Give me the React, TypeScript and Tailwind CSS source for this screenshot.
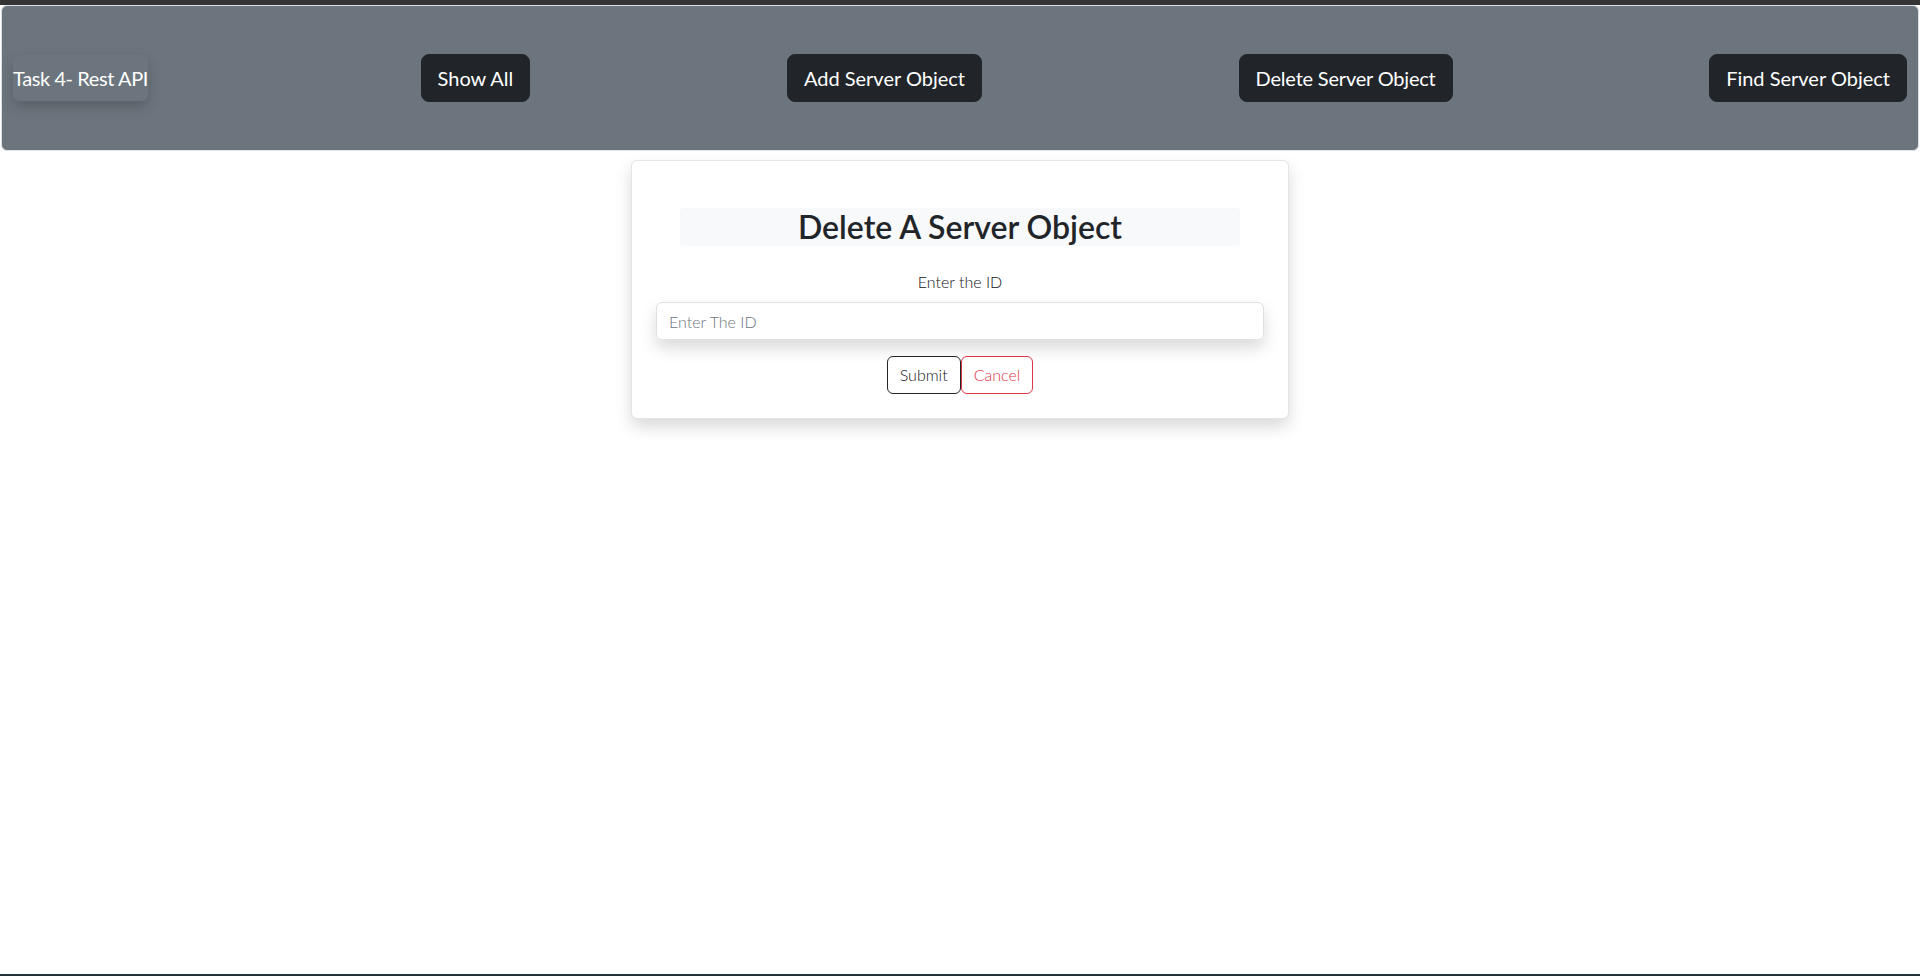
import React from "react";

const navBtn =
  "h-[48px] px-4 rounded-lg bg-[#212529] text-white text-[20px] leading-[30px] border border-[#212529] whitespace-nowrap";

export default function App() {
  return (
    <div className="w-full h-[976px] bg-white flex flex-col font-['Lato','Noto_Sans',sans-serif] overflow-hidden">
      <div className="h-[5px] bg-[#343434] shrink-0" />
      <nav className="mx-px h-[146px] shrink-0 bg-[#6c757d] rounded-md border border-[#dee2e6] flex items-center justify-between px-[11px]">
        <div className="mr-4 h-[46px] flex items-center rounded-md shadow-[0_6px_14px_rgba(0,0,0,0.18)] text-white text-[20px] leading-[30px] tracking-[-0.4px] whitespace-nowrap">
          Task 4- Rest API
        </div>
        <button className={navBtn}>Show All</button>
        <button className={navBtn}>Add Server Object</button>
        <button className={`${navBtn} tracking-[-0.2px]`}>Delete Server Object</button>
        <button className={navBtn}>Find Server Object</button>
      </nav>
      <div className="mt-[9px] mx-auto w-[658px] bg-white border border-[#e3e5e8] rounded-md shadow-[0_8px_16px_rgba(0,0,0,0.15)] px-6 pt-[47px] pb-6">
        <h2 className="mx-6 bg-[#f8f9fa] rounded h-[38px] text-[32px] leading-[38px] text-center font-semibold text-[#212529]">
          Delete A Server Object
        </h2>
        <div className="mt-6 text-center text-base leading-6 font-light text-[#111418]">
          Enter the ID
        </div>
        <input
          className="mt-2 block w-full h-[38px] border border-[#dee2e6] rounded-md px-3 text-base font-light text-[#212529] placeholder:text-[#6c757d] shadow-[0_8px_16px_rgba(0,0,0,0.15)] outline-none"
          placeholder="Enter The ID"
        />
        <div className="mt-4 flex justify-center">
          <button className="h-[38px] px-3 border border-[#212529] rounded-md bg-white text-base font-light text-[#111418]">
            Submit
          </button>
          <button className="h-[38px] px-3 border border-[#dc3545] rounded-md bg-white text-base font-light text-[#dc3545]">
            Cancel
          </button>
        </div>
      </div>
      <div className="flex-1" />
      <div className="h-[2px] shrink-0 bg-[#22333d]" />
    </div>
  );
}
